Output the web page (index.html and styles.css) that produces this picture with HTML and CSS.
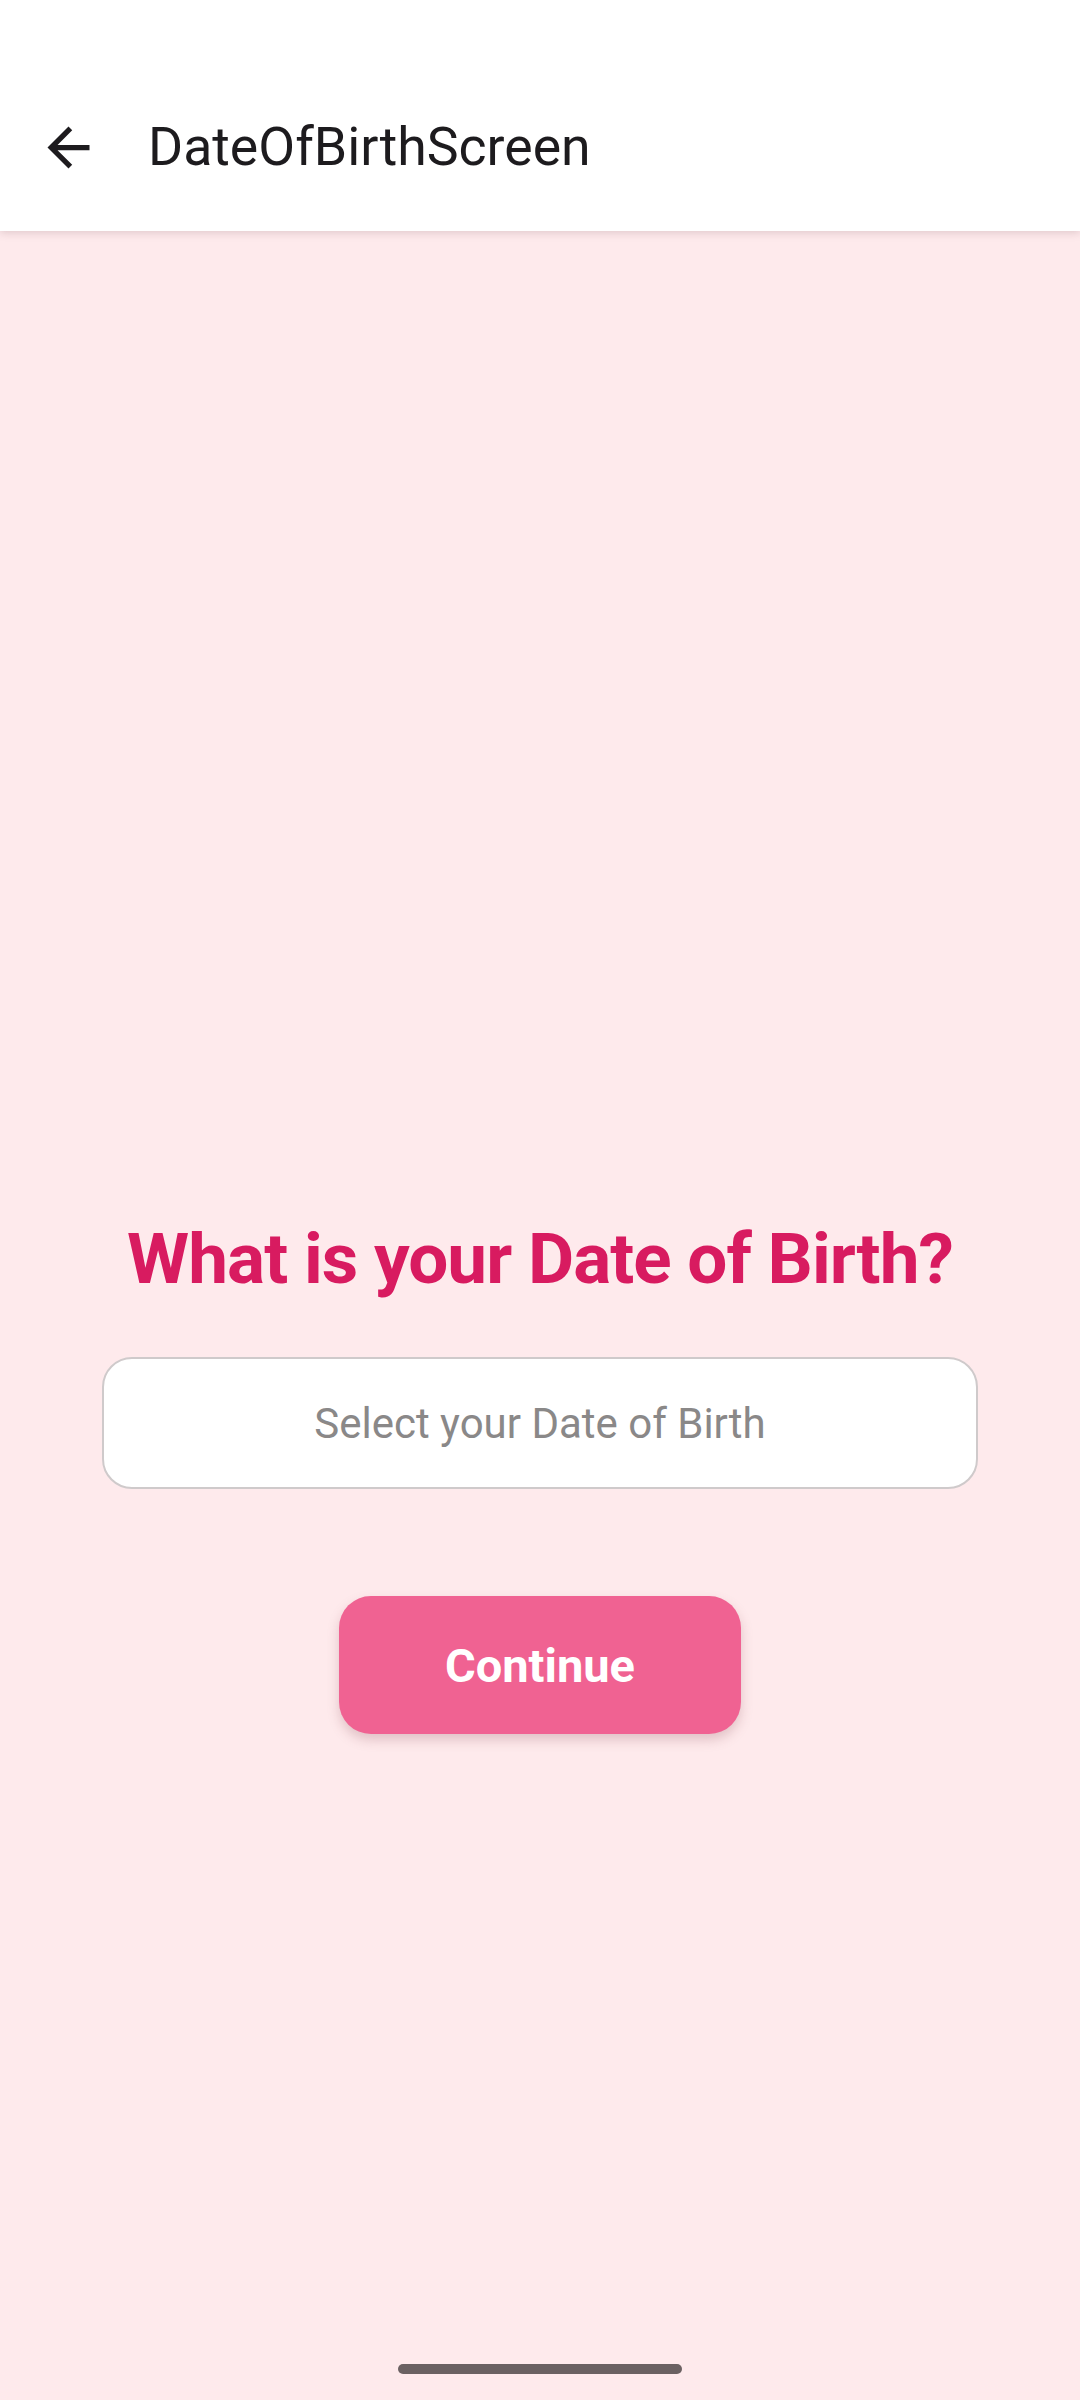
FILE: index.html
```html
<!DOCTYPE html>
<html lang="en">
<head>
<meta charset="utf-8">
<title>DateOfBirthScreen</title>
<link rel="stylesheet" href="styles.css">
</head>
<body>
<div class="screen">
  <header class="topbar">
    <div class="statusbar"></div>
    <div class="appbar">
      <button class="nav-btn" aria-label="Back">
        <svg class="nav-icon" viewBox="0 0 24 24" width="63" height="63"><path d="M20 11H7.83l5.59-5.59L12 4l-8 8 8 8 1.41-1.41L7.83 13H20v-2z" fill="#1d1b1e"/></svg>
      </button>
      <h1 class="appbar-title">DateOfBirthScreen</h1>
    </div>
  </header>
  <main class="content">
    <h2 class="question">What is your Date of Birth?</h2>
    <div class="date-field">Select your Date of Birth</div>
    <button class="continue">Continue</button>
  </main>
  <div class="gesture-bar"></div>
</div>
</body>
</html>
```
FILE: styles.css
```css
* { box-sizing: border-box; }
html, body {
  margin: 0;
  padding: 0;
  width: 1080px;
  height: 2400px;
  background: #feeaec;
  font-family: Roboto, "Noto Sans", sans-serif;
}
.screen {
  position: relative;
  width: 1080px;
  height: 2400px;
  display: flex;
  flex-direction: column;
  overflow: hidden;
}
.topbar {
  background: #ffffff;
  box-shadow: 0 2px 8px rgba(120, 80, 90, 0.22);
  position: relative;
  z-index: 1;
}
.statusbar { height: 63px; }
.appbar {
  height: 168px;
  display: flex;
  align-items: center;
}
.nav-btn {
  border: none;
  background: transparent;
  padding: 0;
  margin-left: 37px;
  width: 63px;
  height: 63px;
  display: flex;
  align-items: center;
  justify-content: center;
}
.nav-icon { display: block; }
.appbar-title {
  margin: 0 0 0 48px;
  font-size: 53.6px;
  font-weight: 400;
  color: #1d1b1e;
  line-height: 1;
}
.content {
  flex: 1;
  display: flex;
  flex-direction: column;
  align-items: center;
  padding-top: 984px;
}
.question {
  margin: 0;
  font-size: 71px;
  letter-spacing: -0.95px;
  line-height: 88px;
  font-weight: 700;
  color: #d81b60;
  text-align: center;
}
.date-field {
  margin-top: 54px;
  width: 876px;
  height: 132px;
  background: #ffffff;
  border: 2px solid #cfcacb;
  border-radius: 30px;
  display: flex;
  align-items: center;
  justify-content: center;
  font-size: 42px;
  color: #8a8888;
}
.continue {
  margin-top: 107px;
  width: 402px;
  height: 138px;
  border: none;
  border-radius: 32px;
  background: #f06292;
  color: #ffffff;
  font-family: Roboto, "Noto Sans", sans-serif;
  font-size: 47px;
  font-weight: 700;
  box-shadow: 0 6px 12px rgba(150, 90, 100, 0.28);
}
.gesture-bar {
  position: absolute;
  left: 398px;
  top: 2364px;
  width: 284px;
  height: 10px;
  border-radius: 5px;
  background: #6b6162;
}
```
